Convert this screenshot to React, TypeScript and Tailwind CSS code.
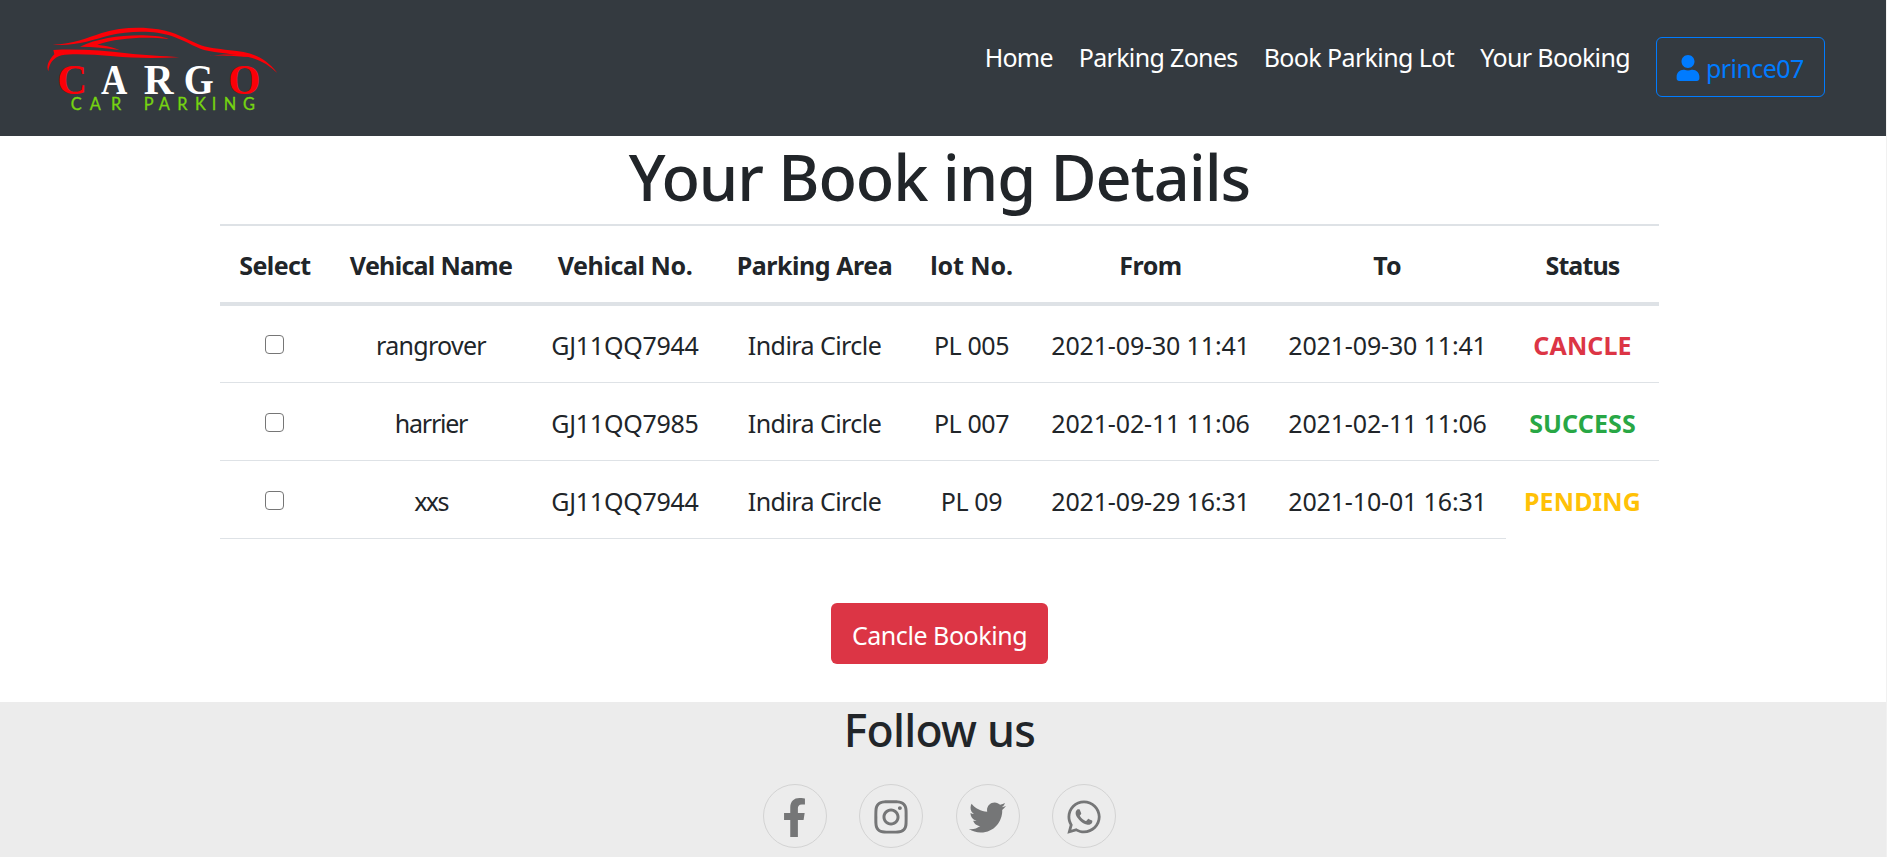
import { FaFacebookF, FaInstagram, FaTwitter, FaUser, FaWhatsapp } from "react-icons/fa";

function Logo() {
  return (
    <svg viewBox="0 0 810 390" className="h-[130px] w-[270px]" role="img" aria-label="Cargo Car Parking">
      <g fill="#fb0007">
        <path d="M68 104 C130 102 170 84 215 69 C265 53 330 49 385 58 C435 66 470 88 505 103 C530 114 560 116 600 121 C655 126 700 135 742 189 C715 163 685 147 655 141 C620 134 560 128 522 120 C495 111 455 88 425 78 C375 60 295 62 240 76 C190 90 130 110 68 104 Z" />
        <path d="M150 110 C200 86 270 75 340 76 C375 77 400 80 416 87 C350 79 265 82 202 104 C230 107 255 113 268 120 C230 114 190 110 150 110 Z" />
        <path d="M70 120 C140 116 220 121 290 130 C340 136 400 138 448 142 C380 145 310 145 250 139 C190 134 130 130 95 136 C70 143 58 160 55 184 C49 170 53 154 73 133 Z" />
        <path d="M536 138 C570 132 620 131 665 139 C640 144 590 133 536 138 Z" />
      </g>
      <g fontFamily="'Liberation Serif', serif" fontWeight="700" fontSize="124">
        <text x="82" y="252" fill="#fb0007">C</text>
        <text x="213" y="252" fill="#ffffff" textLength="79" lengthAdjust="spacingAndGlyphs">A</text>
        <text x="341" y="252" fill="#ffffff">R</text>
        <text x="461" y="252" fill="#ffffff" textLength="90" lengthAdjust="spacingAndGlyphs">G</text>
        <text x="595" y="252" fill="#fb0007">O</text>
      </g>
      <text
        x="122 179 243 341 386 442 495 545 581 639"
        y="301"
        fill="#76d411"
        stroke="#76d411"
        strokeWidth="1"
        fontFamily="Lato, sans-serif"
        fontSize="49"
      >
        CARPARKING
      </text>
    </svg>
  );
}

const links = [
  { label: "Home", className: "tracking-[-0.82px]" },
  { label: "Parking Zones", className: "tracking-[-0.66px]" },
  { label: "Book Parking Lot", className: "tracking-[-0.61px]" },
  { label: "Your Booking", className: "tracking-[-0.63px]" },
];

const columns = [
  { label: "Select", className: "w-[110px] tracking-[-0.59px]" },
  { label: "Vehical Name", className: "w-[202px] tracking-[-0.71px]" },
  { label: "Vehical No.", className: "w-[186px] tracking-[-0.43px]" },
  { label: "Parking Area", className: "w-[193px] tracking-[-0.47px]" },
  { label: "lot No.", className: "w-[121px] tracking-[-0.1px]" },
  { label: "From", className: "w-[237px] tracking-[-0.5px]" },
  { label: "To", className: "w-[237px]" },
  { label: "Status", className: "w-[153px] tracking-[-0.87px]" },
];

const bookings = [
  {
    name: "rangrover", nameClass: "tracking-[-0.7px]", no: "GJ11QQ7944", area: "Indira Circle",
    lot: "PL 005", from: "2021-09-30 11:41", to: "2021-09-30 11:41",
    status: "CANCLE", statusClass: "text-[#dc3545] border-b", height: "h-[77px]", pad: "pt-[1px]",
  },
  {
    name: "harrier", nameClass: "tracking-[-1.25px]", no: "GJ11QQ7985", area: "Indira Circle",
    lot: "PL 007", from: "2021-02-11 11:06", to: "2021-02-11 11:06",
    status: "SUCCESS", statusClass: "text-[#28a745] border-b", height: "h-[78px]", pad: "pt-[2px]",
  },
  {
    name: "xxs", nameClass: "tracking-[-1.6px]", no: "GJ11QQ7944", area: "Indira Circle",
    lot: "PL 09", from: "2021-09-29 16:31", to: "2021-10-01 16:31",
    status: "PENDING", statusClass: "text-[#ffc107]", height: "h-[78px]", pad: "pt-[2px]",
  },
];

const socials = [
  { label: "Facebook", Icon: FaFacebookF, className: "mt-[2px] size-[39px]" },
  { label: "Instagram", Icon: FaInstagram, className: "mt-[2px] size-[38px]" },
  { label: "Twitter", Icon: FaTwitter, className: "mt-[2px] size-[37px]" },
  { label: "WhatsApp", Icon: FaWhatsapp, className: "mt-[2px] size-[38px]" },
];

const cell = "border-b border-[#dee2e6] p-0 text-center align-middle whitespace-nowrap";

export default function App() {
  return (
    <div className="flex h-[857px] overflow-hidden bg-white font-['Noto_Sans',sans-serif] text-[25px] leading-[38px] text-[#212529]">
      <div className="flex min-w-0 flex-1 flex-col">
        <header className="flex h-[136px] shrink-0 items-start justify-between bg-[#343a40] pr-[61px] pl-[30px]">
          <div className="pt-[10px]">
            <Logo />
          </div>
          <nav className="flex items-start pt-[37px] text-white">
            <div className="flex gap-[26px] pt-[1px] pr-[26px]">
              {links.map((l) => (
                <a key={l.label} href="#" className={l.className}>
                  {l.label}
                </a>
              ))}
            </div>
            <a
              href="#"
              className="flex h-[60px] w-[169px] items-center rounded-[6px] border border-[#007bff] pt-[1px] pl-[19px] text-[#007bff]"
            >
              <FaUser className="mr-[6px] h-[26px] w-[24px]" />
              <span className="tracking-[-0.57px]">prince07</span>
            </a>
          </nav>
        </header>

        <main className="flex h-[566px] shrink-0 flex-col items-center pr-[7px]">
          <h1 className="h-[88px] pt-[2px] text-[63px] leading-[77px] font-medium tracking-[-1.05px]">
            Your Book ing Details
          </h1>
          <table className="w-[1439px] table-fixed border-separate border-spacing-0">
            <thead>
              <tr className="h-[82px]">
                {columns.map((c) => (
                  <th
                    key={c.label}
                    className={`border-t-2 border-b-4 border-[#dee2e6] p-0 pt-[1px] text-center align-middle font-bold whitespace-nowrap ${c.className}`}
                  >
                    {c.label}
                  </th>
                ))}
              </tr>
            </thead>
            <tbody>
              {bookings.map((b) => (
                <tr key={b.name} className={b.height}>
                  <td className={`${cell} ${b.pad} pr-[2px]`}>
                    <input
                      type="checkbox"
                      aria-label={b.name}
                      className="mx-auto block h-[19px] w-[19px] appearance-none rounded-[4px] border-[1.5px] border-[#767676] bg-white"
                    />
                  </td>
                  <td className={`${cell} ${b.pad} ${b.nameClass}`}>{b.name}</td>
                  <td className={`${cell} ${b.pad} tracking-[-0.25px]`}>{b.no}</td>
                  <td className={`${cell} ${b.pad} tracking-[-0.56px]`}>{b.area}</td>
                  <td className={`${cell} ${b.pad} tracking-[-0.4px]`}>{b.lot}</td>
                  <td className={`${cell} ${b.pad} tracking-[-0.15px]`}>{b.from}</td>
                  <td className={`${cell} ${b.pad} tracking-[-0.15px]`}>{b.to}</td>
                  <td
                    className={`border-[#dee2e6] p-0 text-center align-middle font-bold tracking-[0.1px] ${b.pad} ${b.statusClass}`}
                  >
                    {b.status}
                  </td>
                </tr>
              ))}
            </tbody>
          </table>
          <button
            type="button"
            className="mt-[64px] h-[61px] w-[217px] rounded-[6px] bg-[#dc3545] pt-[3px] tracking-[-0.45px] text-white"
          >
            Cancle Booking
          </button>
        </main>

        <footer className="flex flex-1 flex-col items-center bg-[#ececec] pr-[7px]">
          <h2 className="mt-[1px] text-[44.5px] leading-[54px] font-medium tracking-[-0.75px]">Follow us</h2>
          <div className="mt-[27px] flex gap-[32.5px]">
            {socials.map(({ label, Icon, className }) => (
              <a
                key={label}
                href="#"
                aria-label={label}
                className="flex size-[64px] items-center justify-center rounded-full border border-[#d3d3d3] text-[#757677]"
              >
                <Icon className={className} />
              </a>
            ))}
          </div>
        </footer>
      </div>
      <div className="w-px shrink-0 bg-[#f1f1f1]" />
    </div>
  );
}
